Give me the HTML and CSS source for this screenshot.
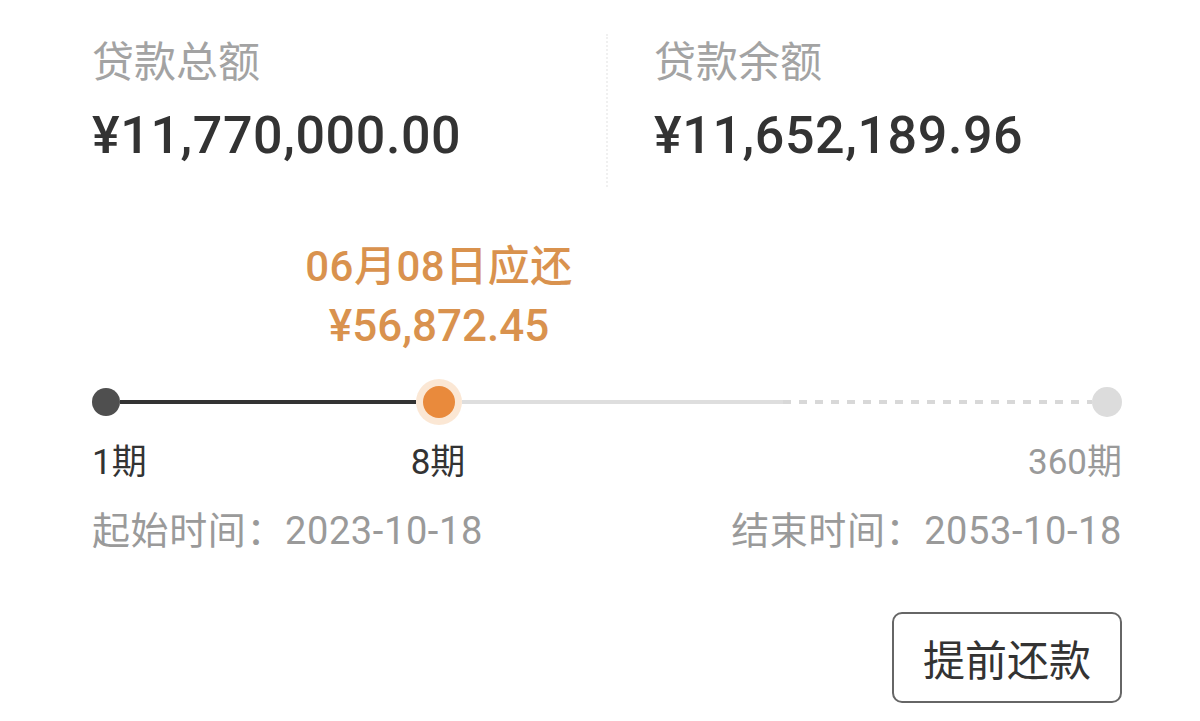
FILE: index.html
```html
<!DOCTYPE html>
<html lang="zh-CN">
<head>
    <meta charset="UTF-8">
    <meta name="viewport" content="width=device-width, initial-scale=1.0">
    <title>贷款详情</title>
    <link rel="stylesheet" href="styles.css">
</head>
<body>
    <div class="loan">
        <div class="summary">
            <div class="summary-item first">
                <div class="summary-label">贷款总额</div>
                <div class="summary-amount">¥11,770,000.00</div>
            </div>
            <div class="summary-item second">
                <div class="summary-label">贷款余额</div>
                <div class="summary-amount">¥11,652,189.96</div>
            </div>
        </div>

        <!-- current installment -->
        <div class="due">
            <div class="due-date">06月08日应还</div>
            <div class="due-amount">¥56,872.45</div>
        </div>

        <div class="track">
            <span class="dot dot-start"></span>
            <span class="line line-done"></span>
            <span class="dot-current"><span class="dot-current-inner"></span></span>
            <span class="line line-rest"></span>
            <span class="line line-dashed"></span>
            <span class="dot dot-end"></span>
        </div>

        <div class="periods">
            <span class="period period-first">1期</span>
            <span class="period period-current">8期</span>
            <span class="period period-last">360期</span>
        </div>

        <div class="dates">
            <span>起始时间：2023-10-18</span>
            <span>结束时间：2053-10-18</span>
        </div>

        <div class="actions">
            <button type="button" class="prepay">提前还款</button>
        </div>
    </div>
</body>
</html>
```

FILE: styles.css
```css
body {
    margin: 0;
    padding: 0;
    background-color: #fff;
    font-family: Roboto, "Noto Sans CJK SC", sans-serif;
    color: #333;
}
.loan {
    width: 1030px;
    padding: 34px 0 0 92px;
}
.summary {
    display: flex;
}
.summary-item.first {
    width: 514px;
    border-right: 2px dotted #f0f0f0;
    padding-bottom: 20px;
}
.summary-item.second {
    padding-left: 46px;
}
.summary-label {
    font-family: "Noto Sans CJK SC", sans-serif;
    font-size: 42px;
    line-height: 50px;
    color: #a3a3a3;
}
.summary-amount {
    margin-top: 21px;
    font-size: 52px;
    line-height: 62px;
    font-weight: 500;
    color: #333;
    letter-spacing: 0.6px;
}
.due {
    width: 300px;
    margin: 55px 0 0 197px;
    text-align: center;
    color: #d9924e;
    font-weight: 500;
}
.due-date {
    font-size: 42px;
    line-height: 50px;
    letter-spacing: 0.5px;
}
.due-amount {
    margin-top: 8px;
    font-size: 44px;
    line-height: 52px;
}
.track {
    display: flex;
    align-items: center;
    height: 46px;
    margin-top: 27px;
}
.dot {
    flex: none;
    width: 28px;
    height: 28px;
    border-radius: 50%;
}
.dot-start {
    background-color: #4f4f4f;
}
.dot-end {
    width: 30px;
    height: 30px;
    background-color: #dcdcdc;
}
.line {
    height: 4px;
}
.line-done {
    width: 296px;
    background-color: #333;
}
.line-rest {
    width: 321px;
    background-color: #dedede;
}
.line-dashed {
    flex: 1;
    background-image: linear-gradient(to right, #d8d8d8 50%, transparent 50%);
    background-size: 16px 4px;
}
.dot-current {
    flex: none;
    width: 46px;
    height: 46px;
    border-radius: 50%;
    background-color: rgba(240, 170, 100, 0.28);
    display: flex;
    align-items: center;
    justify-content: center;
}
.dot-current-inner {
    width: 32px;
    height: 32px;
    border-radius: 50%;
    background-color: #e98a3c;
}
.periods {
    display: flex;
    margin-top: 17px;
    font-size: 35px;
    line-height: 42px;
}
.period-first {
    width: 296px;
    color: #333;
}
.period-current {
    width: 100px;
    text-align: center;
    color: #333;
}
.period-last {
    flex: 1;
    text-align: right;
    color: #9a9a9a;
}
.dates {
    display: flex;
    justify-content: space-between;
    margin-top: 25px;
    font-size: 38px;
    line-height: 44px;
    letter-spacing: 0.6px;
    color: #9a9a9a;
}
.actions {
    display: flex;
    justify-content: flex-end;
    margin-top: 59px;
}
.prepay {
    width: 230px;
    height: 91px;
    border: 2px solid #666;
    border-radius: 10px;
    background-color: #fff;
    font-family: "Noto Sans CJK SC", sans-serif;
    font-size: 42px;
    color: #333;
    padding: 0;
}
```
